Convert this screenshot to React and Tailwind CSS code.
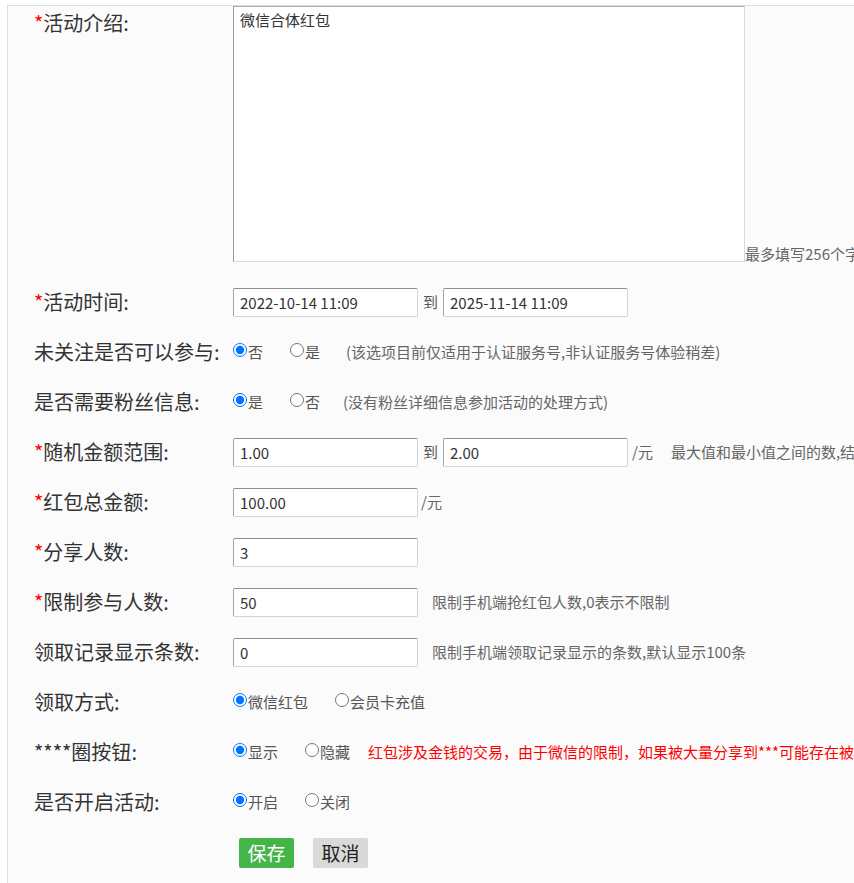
import React from 'react';

const FONT = { fontFamily: '"Microsoft YaHei", "Noto Sans CJK SC", "Noto Sans", sans-serif' };

const Label = ({ required, children }) => (
  <div className="w-[225px] shrink-0 pl-[26px] text-[20px] text-[#333] whitespace-nowrap">
    {required && <span className="text-[#ff0000]">*</span>}
    {children}:
  </div>
);

const TextInput = ({ value }) => (
  <input
    readOnly
    value={value}
    className="w-[185px] h-[29px] px-[6px] text-[15px] text-[#333] bg-white border border-[#d4d4d4] border-t-[#8f8f8f] border-l-[#a5a5a5] rounded-[2px] outline-none"
    style={FONT}
  />
);

const Radio = ({ name, checked, label, last }) => (
  <label className={`flex items-center text-[15px] text-[#555] ${last ? '' : 'mr-[27px]'}`}>
    <input type="radio" name={name} defaultChecked={checked} className="m-0 mb-[5px] w-[14px] h-[14px]" />
    <span className="ml-[1px]">{label}</span>
  </label>
);

const Row = ({ label, required, children }) => (
  <div className="flex items-center h-[50px]">
    <Label required={required}>{label}</Label>
    <div className="flex items-center whitespace-nowrap">{children}</div>
  </div>
);

const Hint = ({ children, className = '' }) => (
  <span className={`text-[15px] text-[#666] ${className}`}>{children}</span>
);

export default function App() {
  return (
    <div className="w-[854px] h-[883px] overflow-hidden bg-white pt-[5px] pl-[7px]" style={FONT}>
      <div className="h-full border-t border-l border-[#dedede] bg-[#fbfbfb]">
        {/* 活动介绍 */}
        <div className="flex items-start pb-[15px]">
          <div className="pt-[2px]">
            <Label required>活动介绍</Label>
          </div>
          <div className="flex items-end whitespace-nowrap">
            <textarea
              readOnly
              defaultValue="微信合体红包"
              className="w-[512px] h-[256px] px-[6px] py-[2px] text-[15px] text-[#333] bg-white border border-[#dadada] border-l-[#999] border-t-[#aaa] resize-none outline-none"
              style={FONT}
            />
            <Hint className="mb-[-3px]">最多填写256个字</Hint>
          </div>
        </div>

        <Row label="活动时间" required>
          <TextInput value="2022-10-14 11:09" />
          <span className="mx-[5px] text-[15px] text-[#555]">到</span>
          <TextInput value="2025-11-14 11:09" />
        </Row>

        <Row label="未关注是否可以参与">
          <Radio name="follow" checked label="否" />
          <Radio name="follow" label="是" />
          <Hint className="ml-[-1px]">(该选项目前仅适用于认证服务号,非认证服务号体验稍差)</Hint>
        </Row>

        <Row label="是否需要粉丝信息">
          <Radio name="fans" checked label="是" />
          <Radio name="fans" label="否" />
          <Hint className="ml-[-4px]">(没有粉丝详细信息参加活动的处理方式)</Hint>
        </Row>

        <Row label="随机金额范围" required>
          <TextInput value="1.00" />
          <span className="mx-[5px] text-[15px] text-[#555]">到</span>
          <TextInput value="2.00" />
          <Hint className="ml-[4px]">/元</Hint>
          <Hint className="ml-[18px]">最大值和最小值之间的数,结果随机</Hint>
        </Row>

        <Row label="红包总金额" required>
          <TextInput value="100.00" />
          <Hint className="ml-[3px]">/元</Hint>
        </Row>

        <Row label="分享人数" required>
          <TextInput value="3" />
        </Row>

        <Row label="限制参与人数" required>
          <TextInput value="50" />
          <Hint className="ml-[14px]">限制手机端抢红包人数,0表示不限制</Hint>
        </Row>

        <Row label="领取记录显示条数">
          <TextInput value="0" />
          <Hint className="ml-[14px]">限制手机端领取记录显示的条数,默认显示100条</Hint>
        </Row>

        <Row label="领取方式">
          <Radio name="way" checked label="微信红包" />
          <Radio name="way" label="会员卡充值" last />
        </Row>

        <Row label="****圈按钮">
          <Radio name="btn" checked label="显示" />
          <Radio name="btn" label="隐藏" last />
          <span className="ml-[18px] text-[15px] text-[#ff0000]">
            红包涉及金钱的交易，由于微信的限制，如果被大量分享到***可能存在被封的风险
          </span>
        </Row>

        <Row label="是否开启活动">
          <Radio name="open" checked label="开启" />
          <Radio name="open" label="关闭" last />
        </Row>

        <div className="flex items-center h-[52px]">
          <div className="w-[225px] shrink-0" />
          <button className="ml-[6px] w-[55px] h-[30px] rounded-[2px] bg-[#44b549] text-[19px] text-white">保存</button>
          <button className="ml-[19px] w-[55px] h-[30px] rounded-[2px] bg-[#d9d9d9] text-[19px] text-[#222]">取消</button>
        </div>
      </div>
    </div>
  );
}
